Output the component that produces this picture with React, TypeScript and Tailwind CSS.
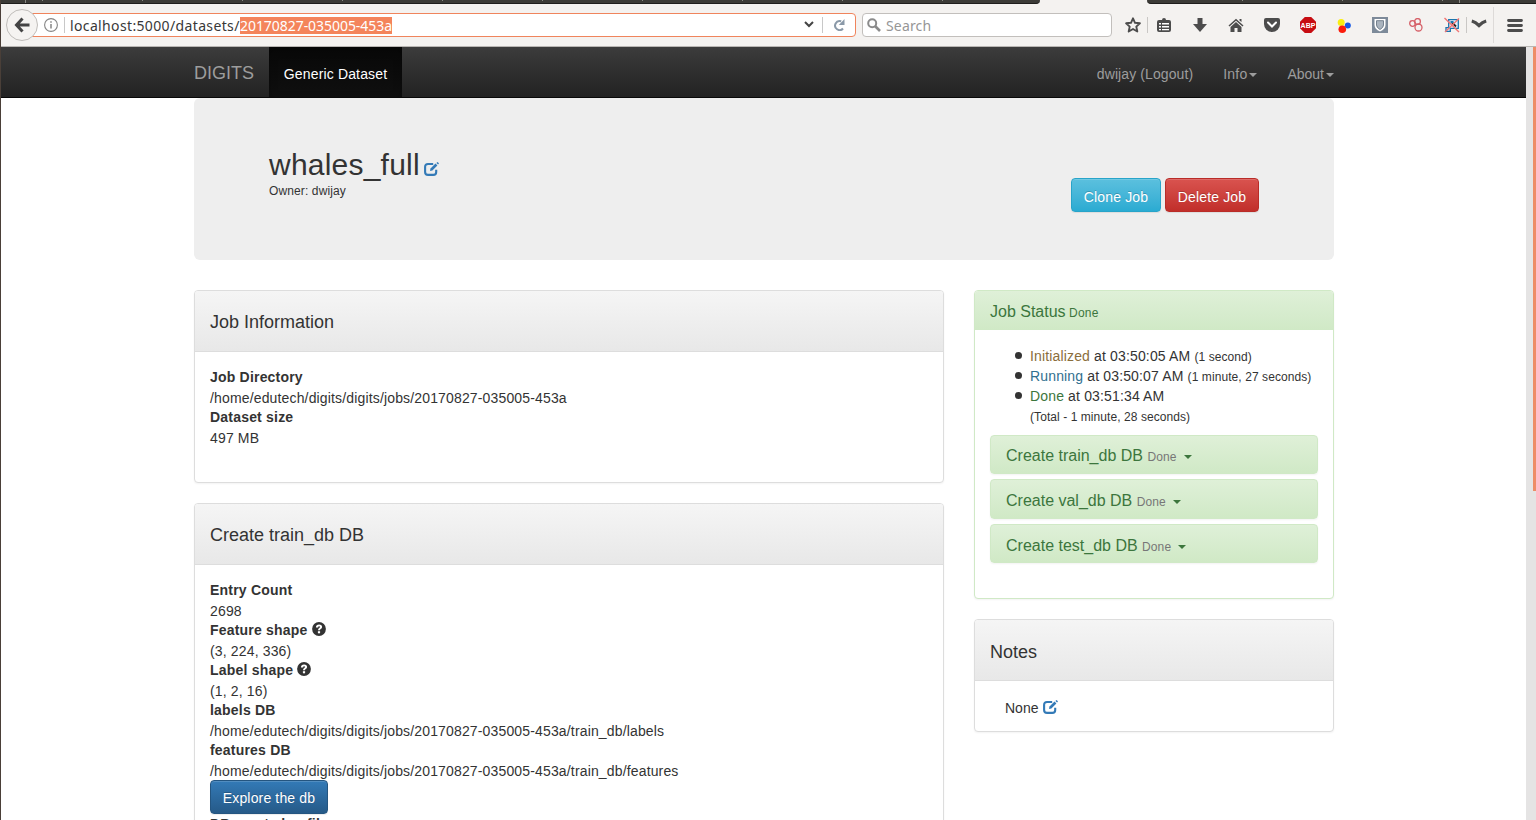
import React from "react";

function Caret({ className = "" }: { className?: string }) {
  return (
    <span className={"inline-block h-0 w-0 border-x-4 border-t-4 border-x-transparent align-middle " + className} />
  );
}

function EditIcon({ className = "" }: { className?: string }) {
  return (
    <svg viewBox="0 0 15 14" className={"inline-block h-[14px] w-[15px] text-[#337ab7] " + className} fill="none" stroke="currentColor">
      <path d="M9.2 2H4Q1.1 2 1.1 5v5q0 2.900 3 2.900h5.200q2.900 0 2.900-2.900V7.800" strokeWidth="2.100" />
      <path d="M6 9l.5-2.500 5-5 1.900 1.900-5 5z" fill="currentColor" stroke="none" />
      <path d="M12.400.9l1.100-.9 1.500 1.300-.9 1.100z" fill="currentColor" stroke="none" />
    </svg>
  );
}

function HelpIcon() {
  return (
    <svg viewBox="0 0 14 14" className="ml-1 inline-block h-[14px] w-[14px] align-[-1px]">
      <circle cx="7" cy="7" r="6.900" fill="#333" />
      <path d="M3.900 5.400Q4 2.500 7.100 2.500q3 0 3 2.500 0 1.300-1.400 2.100-.7.400-.7 1.200H6q0-1.700 1.200-2.400.8-.4.800-.9 0-.7-.9-.7-1 0-1 1.100z" fill="#fff" />
      <path d="M5.900 9.200h2.200v2.100H5.900z" fill="#fff" />
    </svg>
  );
}

function Tick() {
  return <i className="h-px w-[100px] shrink-0 border-l border-[#8a8984]" />;
}

function TabStrip() {
  return (
    <div className="flex h-1 shrink-0 bg-[#f4f2f0]">
      <div className="flex w-[1039px] overflow-hidden rounded-br-[5px] border-b border-[#1f1e1c] bg-[#3c3b37]">
        <i className="ml-6 h-[3px] w-[17px] shrink-0 border-l border-[#8a8984]" />
        {Array.from({ length: 10 }, (_, i) => <Tick key={i} />)}
      </div>
      <div className="ml-[107px] flex flex-1 overflow-hidden rounded-bl-[5px] border-b border-[#1f1e1c] bg-[#3c3b37] pl-[95px]">
        <Tick />
        <Tick />
        <i className="h-px w-[17px] shrink-0 border-l border-[#8a8984]" />
        <i className="h-[3px] w-px shrink-0 bg-[#8a8984]" />
      </div>
    </div>
  );
}

function Toolbar() {
  return (
    <div className="flex h-[42px] shrink-0 items-start bg-[#f4f2f0] pl-[5px] text-[#4c4c4c]">
      <div className="relative z-10 mt-[5px] flex h-8 w-8 shrink-0 items-center justify-center rounded-full border border-[#c0bdba] bg-[#f5f3f1]">
        <svg viewBox="0 0 16 16" className="h-4 w-4" fill="none" stroke="#444" strokeWidth="3">
          <path d="M8.5 1.5L2.5 8l6 6.5M3 8h12.5" />
        </svg>
      </div>
      <div className="-ml-2 mt-[9px] flex h-6 w-[826px] shrink-0 items-center rounded-r-sm border border-[#f0845c] bg-white">
        <svg viewBox="0 0 14 14" className="ml-[13px] h-[14px] w-[14px]" fill="none" stroke="#858585">
          <circle cx="7" cy="7" r="6.4" strokeWidth="1.1" />
          <path d="M7 6v4.5M7 3.2v1.5" strokeWidth="1.5" />
        </svg>
        <div className="ml-[6px] h-4 w-px bg-[#c8c8c8]" />
        <div className="ml-[5px] flex items-center whitespace-pre font-['Noto_Sans',sans-serif] text-[14px] leading-[17px] text-[#383838]">
          <span className="w-[170px] tracking-[0.36px]">localhost:5000/datasets/</span>
          <span className="w-[152px] bg-[#f4845b] tracking-[-0.05px] text-white">20170827-035005-453a</span>
        </div>
        <div className="flex-1" />
        <svg viewBox="0 0 10 7" className="mb-px h-[7px] w-[10px]" fill="none" stroke="#444" strokeWidth="2"><path d="M1 1l4 4 4-4" /></svg>
        <div className="ml-2 h-4 w-px bg-[#c8c8c8]" />
        <svg viewBox="0 0 12 12" className="ml-[10px] mr-[10px] h-3 w-3" fill="none" stroke="#8a99a8" strokeWidth="2">
          <path d="M8.2 2.3A4.5 4.5 0 1 0 10 9.5" /><path d="M11.5 0v6H5.8z" fill="#8a99a8" stroke="none" />
        </svg>
      </div>
      <div className="ml-[6px] mt-[9px] flex h-6 w-[250px] shrink-0 items-center rounded-sm border border-[#c2bfbc] bg-white">
        <svg viewBox="0 0 14 14" className="ml-1 h-[14px] w-[14px]" fill="none" stroke="#8b8b8b">
          <circle cx="5.2" cy="5.2" r="4" strokeWidth="2" /><path d="M8 8l5 5" strokeWidth="2.6" />
        </svg>
        <span className="ml-[5px] pt-px font-['Noto_Sans',sans-serif] text-[14px] leading-5 tracking-[0.15px] text-[#969696]">Search</span>
      </div>
      <div className="mt-[13px] flex h-4 items-center">
        <svg viewBox="0 0 16 16" className="ml-[13px] h-4 w-4" fill="none" stroke="#4c4c4c" strokeWidth="1.9" strokeLinejoin="round">
          <path d="M8 1.300l2 4.500 4.900.5-3.600 3.300 1 4.900L8 12l-4.300 2.500 1-4.900L1.100 6.300l4.900-.5z" />
        </svg>
        <div className="ml-[6px] h-4 w-px bg-[#c9c7c5]" />
        <svg viewBox="0 0 14 14" className="ml-[9px] h-[14px] w-[14px]">
          <path d="M2 2h3a2 2 0 0 1 4 0h3a2 2 0 0 1 2 2v8a2 2 0 0 1-2 2H2a2 2 0 0 1-2-2V4a2 2 0 0 1 2-2z" fill="#4c4c4c" />
          <path d="M2 5h2v1.500H2zM5 5h7v1.500H5zM2 8h2v1.500H2zM5 8h7v1.500H5zM2 11h2v1.200H2zM5 11h7v1.200H5z" fill="#fff" />
        </svg>
        <svg viewBox="0 0 14 14" className="ml-[22px] h-[14px] w-[14px]"><path d="M4.500 0h5v6H14l-7 8-7-8h4.500z" fill="#4c4c4c" /></svg>
        <svg viewBox="0 0 16 15" className="ml-[21px] h-[15px] w-4" fill="#4c4c4c">
          <path d="M8 .7L15.500 7.500l-1 1L8 2.700 1.500 8.500l-1-1z" /><path d="M8 4l5.500 5v5H9.500v-4h-3v4h-4V9zM11.500 1h2v3l-2-1.500z" />
        </svg>
        <svg viewBox="0 0 16 14" className="ml-5 h-[14px] w-4"><path d="M2 0h12a2 2 0 0 1 2 2v4a8 8 0 0 1-16 0V2a2 2 0 0 1 2-2z" fill="#4c4c4c" /><path d="M4 4.500l4 4 4-4" fill="none" stroke="#fff" strokeWidth="2" strokeLinecap="round" /></svg>
        <div className="ml-5 flex h-4 w-4 items-center justify-center bg-[#c70d12] font-['Liberation_Sans',sans-serif] text-[7px] font-bold leading-none text-white [clip-path:polygon(30%_0,70%_0,100%_30%,100%_70%,70%_100%,30%_100%,0_70%,0_30%)]">ABP</div>
        <svg viewBox="0 0 14 14" className="ml-[21px] mt-px h-[14px] w-[14px]"><circle cx="4.200" cy="3.500" r="3.500" fill="#f9ee12" /><circle cx="10.800" cy="6.500" r="3" fill="#1557e6" /><circle cx="5.300" cy="10.200" r="3.800" fill="#fb1c0c" /></svg>
        <svg viewBox="0 0 16 16" className="ml-[21px] h-4 w-4"><path d="M0 0h16v16H0z" fill="#7d8a99" /><path d="M2.500 2h11v6q0 4-5.500 6.500Q2.500 12 2.500 8z" fill="#fff" /><path d="M4.500 3.700h7V8q0 2.500-3.500 4.500Q4.500 10.500 4.500 8z" fill="#aab4be" stroke="#75818e" /></svg>
        <svg viewBox="0 0 14 14" className="ml-[21px] h-[14px] w-[14px]" fill="none" stroke="#d66068" strokeWidth="1.300"><circle cx="3.500" cy="5.500" r="2.800" /><circle cx="8.500" cy="3.500" r="2.900" /><circle cx="9.500" cy="9.500" r="3.500" /></svg>
        <svg viewBox="0 0 16 16" className="ml-[21px] h-4 w-4" fill="none"><path d="M4.700 2.700h9.600v8.600h-8v3H2v-3.600h2.700z" fill="#e4effa" stroke="#1975ae" strokeWidth="1.300" /><path d="M7.500 5l4.500 4.500" stroke="#222" strokeWidth="1.800" /><path d="M6.500 4h3v2h-3z" fill="#1975ae" /><path d="M.5 1L15 15M15 1.500L1 15" stroke="#f07575" strokeWidth="1.400" /></svg>
        <div className="ml-[6px] h-4 w-px bg-[#c9c7c5]" />
        <svg viewBox="0 0 16 10" className="mb-[2px] ml-1 h-[10px] w-4"><path d="M.8 2Q4.500 3 8 6.500 11.500 3 15.200 2" fill="none" stroke="#4c4c4c" strokeWidth="3.200" /></svg>
        <div className="ml-[6px] h-9 w-px bg-[#dddad8]" />
        <svg viewBox="0 0 16 13" className="ml-[13px] h-[13px] w-4" stroke="#4c4c4c" strokeWidth="2.800" strokeLinecap="round"><path d="M1.500 1.500h13M1.500 6.500h13M1.500 11.500h13" /></svg>
      </div>
    </div>
  );
}

function Navbar() {
  return (
    <nav className="h-[51px] shrink-0 border-b border-[#080808] bg-linear-to-b from-[#3c3c3c] to-[#222]">
      <div className="ml-[193px] flex h-[50px] w-[1140px] items-center whitespace-nowrap text-[14px] leading-5 text-[#9d9d9d]">
        <span className="w-[75px] pt-[2px] text-[18px]">DIGITS</span>
        <span className="flex h-full w-[133px] items-center justify-center bg-linear-to-b from-[#080808] to-[#0f0f0f] pt-1 tracking-[0.15px] text-white shadow-[inset_0_3px_9px_rgba(0,0,0,.25)]">Generic Dataset</span>
        <div className="ml-auto flex items-center gap-[30px] pt-1">
          <span className="tracking-[0.1px]">dwijay (Logout)</span>
          <span className="tracking-[0.2px]">Info<Caret className="ml-[2px]" /></span>
          <span>About<Caret className="ml-[2px]" /></span>
        </div>
      </div>
    </nav>
  );
}

function Button({ className, children }: { className: string; children: React.ReactNode }) {
  return (
    <button className={"flex h-[34px] items-center justify-center whitespace-nowrap rounded border bg-linear-to-b text-[14px] leading-5 tracking-[0.15px] text-white shadow-[inset_0_1px_0_rgba(255,255,255,.15),0_1px_1px_rgba(0,0,0,.075)] [text-shadow:0_-1px_0_rgba(0,0,0,.2)] " + className}>
      {children}
    </button>
  );
}

function Panel({ title, titleClass, className = "", children }: { title: string; titleClass: string; className?: string; children: React.ReactNode }) {
  return (
    <section className={"rounded border border-[#ddd] bg-white shadow-[0_1px_2px_rgba(0,0,0,.05)] " + className}>
      <h4 className={"flex h-[61px] items-center rounded-t-[3px] border-b border-[#ddd] bg-linear-to-b from-[#f5f5f5] to-[#e8e8e8] px-[15px] text-[18px] leading-5 " + titleClass}>{title}</h4>
      <div className="p-[15px]">{children}</div>
    </section>
  );
}

function Term({ name, help, children }: { name: string; help?: boolean; children?: React.ReactNode }) {
  return (
    <>
      <dt className="h-5 whitespace-nowrap font-bold leading-5 tracking-[0.2px]">{name}{help && <HelpIcon />}</dt>
      <dd className="h-5 whitespace-nowrap pt-px leading-5 tracking-[0.153px]">{children}</dd>
    </>
  );
}

const tasks = [
  { name: "Create train_db DB", size: "h-[39px] pt-[10px]" },
  { name: "Create val_db DB", size: "h-10 pt-[11px]" },
  { name: "Create test_db DB", size: "h-[39px] pt-[11px]" },
];

const statuses = [
  { name: "Initialized", color: "text-[#8a6d3b]", time: "03:50:05 AM", note: "(1 second)" },
  { name: "Running", color: "text-[#31708f]", time: "03:50:07 AM", note: "(1 minute, 27 seconds)" },
  { name: "Done", color: "text-[#3c763d]", time: "03:51:34 AM", note: "" },
];

export default function App() {
  return (
    <div className="flex h-[820px] w-[1536px] flex-col overflow-hidden border-l border-[#4a3f38] bg-white font-['Liberation_Sans',sans-serif] text-[14px] leading-5 text-[#333]">
      <TabStrip />
      <Toolbar />
      <div className="h-px shrink-0 bg-[#b9b6b3]" />
      <div className="flex min-h-0 flex-1">
        <div className="flex min-w-0 flex-1 flex-col">
          <Navbar />
          <main className="ml-[193px] w-[1140px]">
            <header className="flex h-[162px] justify-between rounded-md bg-[#eee] px-[75px]">
              <div className="pt-[50px]">
                <h2 className="flex h-[33px] items-center text-[30px] leading-[33px] tracking-[0.22px]">whales_full<EditIcon className="ml-1 mt-2" /></h2>
                <p className="text-[12px] leading-5 tracking-[0.12px]">Owner: dwijay</p>
              </div>
              <div className="flex gap-1 pt-20">
                <Button className="w-[90px] border-[#28a4c9] from-[#5bc0de] to-[#2aabd2] pt-[3px]">Clone Job</Button>
                <Button className="w-[94px] border-[#b92c28] from-[#d9534f] to-[#c12e2a] pt-[3px]">Delete Job</Button>
              </div>
            </header>
            <div className="mt-[30px] flex items-start gap-[30px]">
              <div className="flex w-[750px] flex-col gap-5">
                <Panel title="Job Information" titleClass="pt-px" className="h-[193px]">
                  <dl>
                    <Term name="Job Directory">/home/edutech/digits/digits/jobs/20170827-035005-453a</Term>
                    <Term name="Dataset size">497 MB</Term>
                  </dl>
                </Panel>
                <Panel title="Create train_db DB" titleClass="pt-px">
                  <dl>
                    <Term name="Entry Count">2698</Term>
                    <Term name="Feature shape" help>(3, 224, 336)</Term>
                    <Term name="Label shape" help>(1, 2, 16)</Term>
                    <Term name="labels DB">/home/edutech/digits/digits/jobs/20170827-035005-453a/train_db/labels</Term>
                    <Term name="features DB">/home/edutech/digits/digits/jobs/20170827-035005-453a/train_db/features</Term>
                    <Button className="w-[118px] border-[#245580] from-[#337ab7] to-[#265a88] pt-px">Explore the db</Button>
                    <Term name="DB create log file" />
                  </dl>
                </Panel>
              </div>
              <div className="flex w-[360px] flex-col gap-5">
                <section className="h-[309px] rounded border border-[#d0e9c6] bg-white shadow-[0_1px_2px_rgba(0,0,0,.05)]">
                  <h4 className="h-[39px] rounded-t-[3px] bg-linear-to-b from-[#dff0d8] to-[#d0e9c6] px-[15px] pt-[11px] text-[16px] leading-5 text-[#3c763d]">
                    Job Status <small className="-ml-px text-[12px] tracking-[0.2px]">Done</small>
                  </h4>
                  <div className="px-[15px] pt-4">
                    <ul className="whitespace-nowrap pl-[25px]">
                      {statuses.map((s) => (
                        <li key={s.name} className="flex h-5 items-baseline tracking-[0.15px]">
                          <span className="mr-2 h-[7px] w-[7px] shrink-0 -translate-y-[2px] rounded-full bg-[#333]" />
                          <span className="whitespace-pre"><span className={s.color}>{s.name}</span> at {s.time} <small className="text-[12px] tracking-[0.08px]">{s.note}</small></span>
                        </li>
                      ))}
                    </ul>
                    <p className="h-5 pl-10 text-[12px] leading-[22px] tracking-[0.07px]">(Total - 1 minute, 28 seconds)</p>
                    <div className="mt-[9px] flex flex-col gap-[5px]">
                      {tasks.map((t) => (
                        <div key={t.name} className={"rounded border border-[#d0e9c6] bg-linear-to-b from-[#dff0d8] to-[#d0e9c6] px-[15px] text-[16px] leading-5 text-[#3c763d] shadow-[0_1px_2px_rgba(0,0,0,.05)] " + t.size}>
                          {t.name} <small className="text-[12px] tracking-[0.1px] text-[#777]">Done</small><Caret className="ml-[7px]" />
                        </div>
                      ))}
                    </div>
                  </div>
                </section>
                <Panel title="Notes" titleClass="pt-1" className="h-[113px]">
                  <p className="flex items-center px-[15px] pt-[2px]">None<EditIcon className="-mt-[2px] ml-[5px]" /></p>
                </Panel>
              </div>
            </div>
          </main>
        </div>
        <div className="flex w-[10px] shrink-0 justify-end bg-[#e5e4e4]"><div className="h-[444px] w-[3px] bg-[#ee8c66]" /></div>
      </div>
    </div>
  );
}
